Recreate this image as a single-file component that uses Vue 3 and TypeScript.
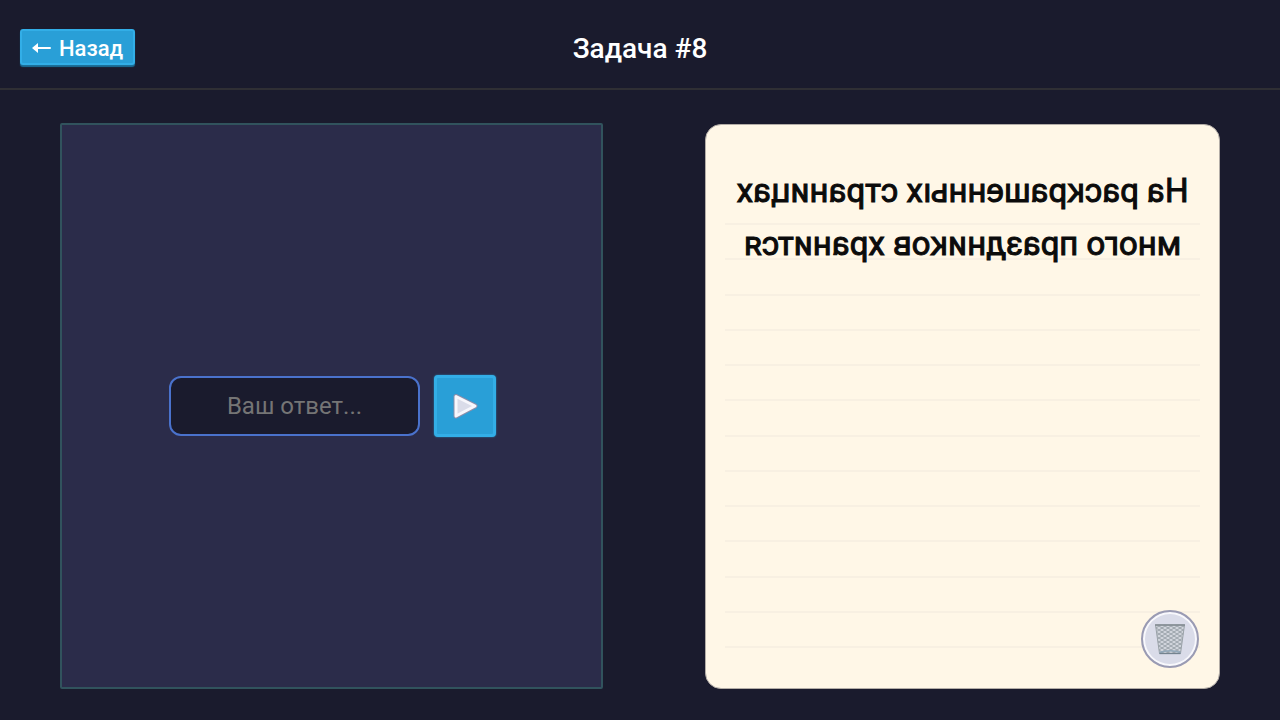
<script setup lang="ts">
import { ref } from 'vue'

const answer = ref('')
const riddle: string[] = ['На раскрашенных страницах', 'много праздников хранится']
const ruledLines = 13
</script>

<template>
  <div class="page">
    <header class="top">
      <button class="back" type="button">
        <svg class="arrow" viewBox="0 0 20 14" aria-hidden="true">
          <path d="M5 7H18" />
          <path class="head" d="M0 7L6 2V12Z" />
        </svg>
        <span>Назад</span>
      </button>
      <h1>Задача #8</h1>
    </header>
    <main class="board">
      <form class="panel" @submit.prevent>
        <input v-model="answer" class="answer" type="text" placeholder="Ваш ответ..." aria-label="Ваш ответ" />
        <button class="send" type="submit" aria-label="Ответить">
          <svg viewBox="0 0 28 28" aria-hidden="true">
            <path class="rim" d="M5 4.5L24 14L5 24Z" />
            <path class="fill" d="M5 4.5L24 14L5 24Z" />
          </svg>
        </button>
      </form>
      <section class="paper">
        <div class="rules" aria-hidden="true"><i v-for="n in ruledLines" :key="n"></i></div>
        <p class="riddle">
          <span v-for="line in riddle" :key="line">{{ line }}</span>
        </p>
        <button class="clear" type="button" aria-label="Очистить">
          <svg viewBox="0 0 34 34" aria-hidden="true">
            <defs>
              <pattern id="mesh" width="6" height="4" patternUnits="userSpaceOnUse">
                <path d="M0 0L6 4M6 0L0 4" fill="none" stroke="#8d969d" stroke-width="0.8" />
              </pattern>
            </defs>
            <path d="M2.5 3H31.5L27.5 31.5H6.5Z" fill="#d0d4db" />
            <path d="M2.5 3H31.5L27.5 31.5H6.5Z" fill="url(#mesh)" stroke="#9aa2a8" stroke-width="1" />
            <path d="M2 3H32" stroke="#858e94" stroke-width="1.6" />
            <path d="M6.5 30.5Q17 27 27.5 30.5" fill="none" stroke="#93a9bb" stroke-width="1.5" />
            <path d="M6.5 31.5H27.5" stroke="#74838f" stroke-width="1.3" />
          </svg>
        </button>
      </section>
    </main>
  </div>
</template>

<style>
body {
  margin: 0;
  background: #1a1b2d;
}
</style>

<style scoped>
.page {
  box-sizing: border-box;
  min-height: 100vh;
  display: flex;
  flex-direction: column;
  background: #1a1b2d;
  font-family: Roboto, "Liberation Sans", sans-serif;
}
.top {
  display: grid;
  grid-template-columns: 1fr auto 1fr;
  align-items: center;
  height: 88px;
  padding: 0 20px;
  border-bottom: 2px solid #2f2f34;
}
h1 {
  grid-column: 2;
  margin: 0;
  padding-top: 10px;
  color: #fff;
  font-size: 28px;
  font-weight: 500;
  line-height: 36px;
}
.back {
  justify-self: start;
  display: flex;
  align-items: center;
  gap: 7px;
  height: 36px;
  margin-top: 6px;
  padding: 2px 10px 0;
  border: 2px solid #32aee7;
  border-radius: 3px;
  background: #299fd7;
  box-shadow: 0 2px 1px #1b6f98;
  color: #fff;
  font-family: inherit;
  font-size: 22px;
  font-weight: 500;
}
.arrow {
  width: 20px;
  height: 14px;
  fill: none;
  stroke: #fff;
  stroke-width: 2;
  stroke-linecap: round;
}
.head {
  fill: #fff;
  stroke: none;
}
.board {
  flex: 1;
  display: grid;
  grid-template-columns: 543fr 515fr;
  gap: 102px;
  padding: 33px 60px 31px;
}
.panel {
  display: flex;
  align-items: center;
  justify-content: center;
  gap: 14px;
  padding-left: 2px;
  border: 2px solid #31535d;
  border-radius: 2px;
  background: #2b2c4a;
}
.answer {
  box-sizing: border-box;
  width: 251px;
  height: 60px;
  padding: 0 12px;
  border: 2px solid #4a72cc;
  border-radius: 12px;
  background: #1a1b2d;
  color: #fff;
  font-family: inherit;
  font-size: 24px;
  text-align: center;
}
.answer::placeholder {
  color: #757575;
}
.send {
  width: 62px;
  height: 62px;
  padding: 0;
  border: 3px solid #33aee7;
  border-radius: 4px;
  background: #299fd7;
  box-shadow: 0 0 2px #248bb9;
  display: grid;
  place-items: center;
}
.send svg {
  width: 28px;
  height: 28px;
}
.rim {
  fill: #8b8fab;
  stroke: #8b8fab;
  stroke-width: 5;
  stroke-linejoin: round;
}
.fill {
  fill: #dadce9;
  stroke: #f7f7fc;
  stroke-width: 3;
  stroke-linejoin: round;
}
.paper {
  position: relative;
  box-sizing: border-box;
  margin-top: 1px;
  padding: 39px 24px;
  border: 1px solid #b3ada7;
  border-radius: 16px;
  background: #fff7e7;
}
.rules {
  position: absolute;
  inset: 98px 19px 40px;
  display: flex;
  flex-direction: column;
  justify-content: space-between;
}
.rules i {
  height: 2px;
  background: #f8f0e2;
}
.riddle {
  position: relative;
  margin: 0;
  color: #0b0b0b;
  font-size: 33px;
  font-weight: 400;
  line-height: 53px;
  text-align: center;
  transform: scaleX(-1);
  -webkit-text-stroke: 1px #0b0b0b;
}
.riddle span {
  display: block;
  white-space: nowrap;
}
.clear {
  position: absolute;
  right: 20px;
  bottom: 20px;
  box-sizing: border-box;
  width: 58px;
  height: 58px;
  padding: 0;
  border: 2px solid #9a9bb3;
  border-radius: 50%;
  background: #dadce9;
  box-shadow: inset 0 0 0 2px #f8f8fc;
  display: grid;
  place-items: center;
}
.clear svg {
  width: 34px;
  height: 34px;
}
</style>
